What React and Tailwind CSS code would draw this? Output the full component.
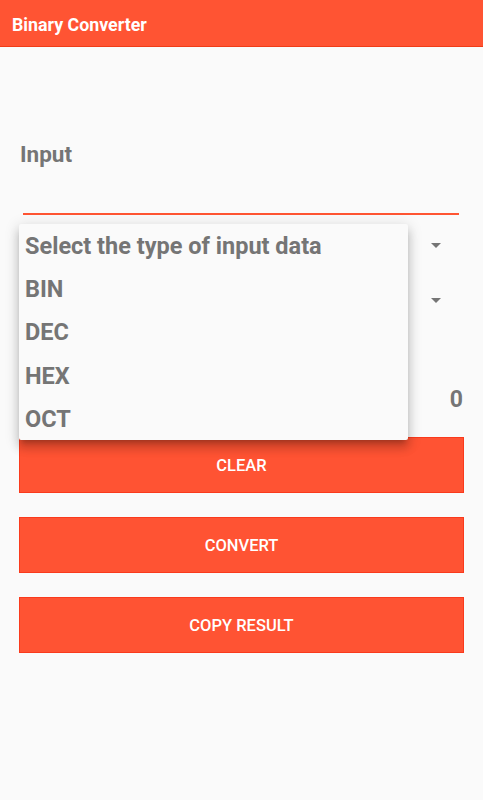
import React from "react";

function Arrow() {
  return (
    <svg width="10" height="5" viewBox="0 0 10 5" className="block">
      <path d="M0 0 L10 0 L5 5 Z" fill="#757575" />
    </svg>
  );
}

export default function App() {
  const items = ["Select the type of input data", "BIN", "DEC", "HEX", "OCT"];
  const buttons = ["CLEAR", "CONVERT", "COPY RESULT"];
  return (
    <div
      className="relative w-[483px] h-[800px] bg-[#fafafa] overflow-hidden"
      style={{ fontFamily: "Roboto, 'Noto Sans', sans-serif" }}
    >
      <div className="h-[47px] bg-[#ff5433] border-b border-[#f03c17] flex items-center pl-[12px] pt-[3px]">
        <span className="text-white text-[17.8px] font-bold leading-none">Binary Converter</span>
      </div>

      <div className="px-[19px] flex flex-col">
        <div className="mt-[95px] pl-[1px] text-[22.5px] leading-[24px] font-bold text-[#757575]">Input</div>
        <div className="mt-[47px] ml-[4px] mr-[5px] h-[2px] bg-[#ff5533]" />
        <div className="h-[60px] flex items-center justify-end pr-[23px]">
          <Arrow />
        </div>
        <div className="h-[50px] flex items-center justify-end pr-[23px]">
          <Arrow />
        </div>
        <div className="mt-[50px] h-[48px] flex items-center justify-end pr-[1px]">
          <span className="text-[23px] font-bold text-[#757575] leading-none">0</span>
        </div>
        <div className="mt-[14px] flex flex-col gap-[24px]">
          {buttons.map((b) => (
            <div
              key={b}
              className="h-[56px] pt-[2px] bg-[#ff5333] border border-[#fa3a1c] flex items-center justify-center text-white text-[16.5px] font-medium"
            >
              {b}
            </div>
          ))}
        </div>
      </div>

      <div className="absolute left-[19px] top-[224px] w-[389px] h-[216px] pt-[1px] bg-[#fafafa] rounded-[2px] shadow-[0_8px_10px_1px_rgba(0,0,0,0.14),0_3px_14px_2px_rgba(0,0,0,0.12),0_5px_5px_-3px_rgba(0,0,0,0.2)]">
        {items.map((it) => (
          <div
            key={it}
            className="h-[43.2px] flex items-center pl-[6px] text-[23.5px] font-bold text-[#757575]"
          >
            {it}
          </div>
        ))}
      </div>
    </div>
  );
}
